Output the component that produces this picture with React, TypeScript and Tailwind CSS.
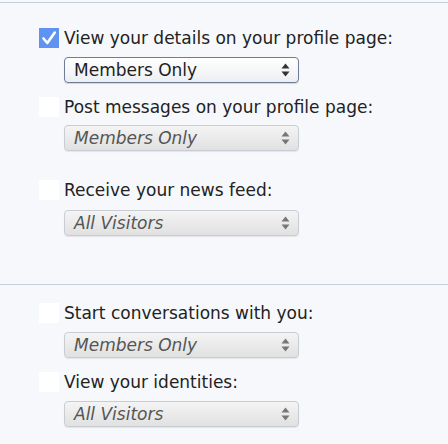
import React from "react";

function Arrows({ dark }: { dark: boolean }) {
  const c = dark ? "#333" : "#777";
  return (
    <svg width="9" height="14" viewBox="0 0 9 14" className="shrink-0">
      <path d="M4.5 0.5 L8.5 5.5 L0.5 5.5 Z" fill={c} />
      <path d="M4.5 13.5 L8.5 8.5 L0.5 8.5 Z" fill={c} />
    </svg>
  );
}

function Select({ value, active }: { value: string; active?: boolean }) {
  return (
    <div
      className={
        "ml-[64px] w-[235px] h-[26px] rounded-[4px] flex items-center justify-between pl-[9px] pr-[8px] " +
        (active
          ? "border border-[#6f7c95] bg-gradient-to-b from-white to-[#eceff3] text-[#1e1e1e] shadow-[0_1px_1px_rgba(0,0,0,0.15)]"
          : "border border-[#c9ccd2] bg-gradient-to-b from-[#f4f4f4] to-[#e1e1e1] text-[#555] italic shadow-[0_1px_1px_rgba(0,0,0,0.08)]")
      }
    >
      <span className="text-[17px] leading-none">{value}</span>
      <Arrows dark={!!active} />
    </div>
  );
}

function Label({ text, checked }: { text: string; checked?: boolean }) {
  return (
    <div className="flex items-center h-[22px] ml-[39px]">
      {checked ? (
        <div className="w-[20px] h-[20px] bg-[#5e93f2] flex items-center justify-center">
          <svg width="16" height="16" viewBox="0 0 16 16">
            <path d="M2.5 8.5 L6.3 13 L13.8 2.5" stroke="white" strokeWidth="2.6" fill="none" strokeLinecap="round" strokeLinejoin="round" />
          </svg>
        </div>
      ) : (
        <div className="w-[20px] h-[20px] bg-white" />
      )}
      <span className="ml-[5px] text-[17px] text-[#222] leading-none">{text}</span>
    </div>
  );
}

export default function App() {
  return (
    <div
      className="w-[448px] h-[444px] bg-[#f6f8fc] overflow-hidden"
      style={{ fontFamily: '"DejaVu Sans", Verdana, sans-serif' }}
    >
      <div className="h-[2px]" />
      <div className="h-[1px] bg-[#c8cfdc]" />
      <div className="pt-[24px]">
        <Label text="View your details on your profile page:" checked />
        <div className="mt-[8px]">
          <Select value="Members Only" active />
        </div>
        <div className="mt-[13px]">
          <Label text="Post messages on your profile page:" />
        </div>
        <div className="mt-[7px]">
          <Select value="Members Only" />
        </div>
        <div className="mt-[28px]">
          <Label text="Receive your news feed:" />
        </div>
        <div className="mt-[9px]">
          <Select value="All Visitors" />
        </div>
      </div>
      <div className="mt-[48px] h-[1px] bg-[#c8cfdc]" />
      <div className="pt-[17px]">
        <Label text="Start conversations with you:" />
        <div className="mt-[8px]">
          <Select value="Members Only" />
        </div>
        <div className="mt-[13px]">
          <Label text="View your identities:" />
        </div>
        <div className="mt-[8px]">
          <Select value="All Visitors" />
        </div>
      </div>
    </div>
  );
}
